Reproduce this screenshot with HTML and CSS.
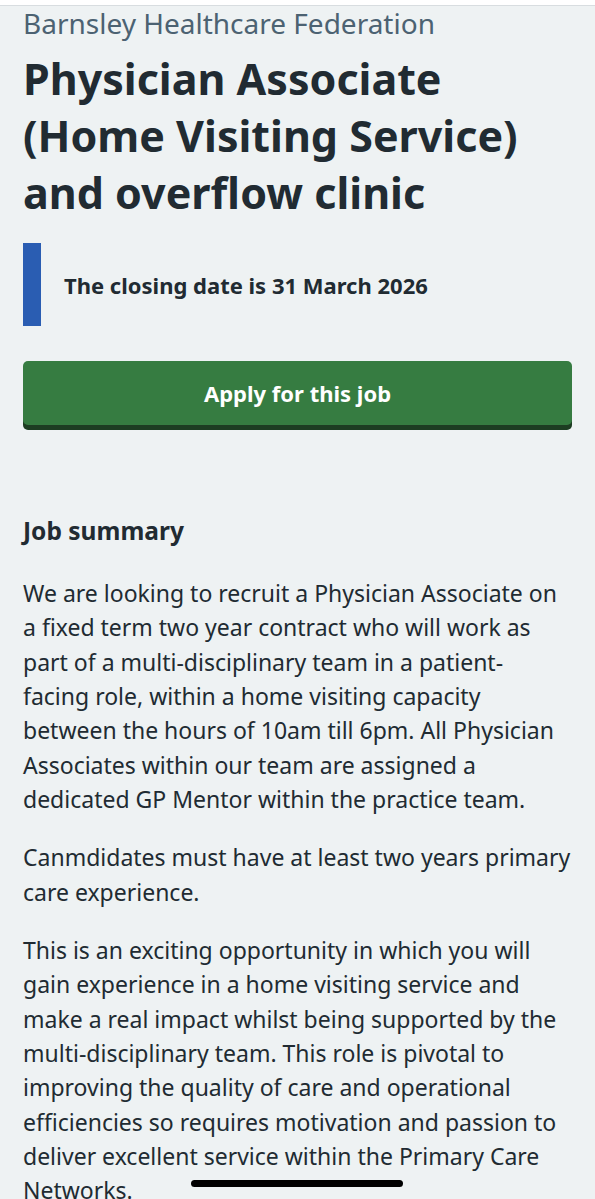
FILE: index.html
```html
<!DOCTYPE html>
<html lang="en">
<head>
<meta charset="utf-8">
<title>Physician Associate (Home Visiting Service) and overflow clinic</title>
<link rel="stylesheet" href="styles.css">
</head>
<body>
<div class="topbar"></div>
<main class="page">
  <p class="org">Barnsley Healthcare Federation</p>
  <h1 class="title">Physician Associate (Home Visiting Service) and overflow clinic</h1>
  <div class="inset">
    <p class="inset-text">The closing date is 31 March 2026</p>
  </div>
  <a class="apply" href="#">Apply for this job</a>
  <section class="summary">
    <h2 class="summary-title">Job summary</h2>
    <p>We are looking to recruit a Physician Associate on a fixed term two year contract who will work as part of a multi-disciplinary team in a patient-<br>facing role, within a home visiting capacity between the hours of 10am till 6pm. All Physician Associates within our team are assigned a dedicated GP Mentor within the practice team.</p>
    <p>Canmdidates must have at least two years primary care experience.</p>
    <p>This is an exciting opportunity in which you will gain experience in a home visiting service and make a real impact whilst being supported by the multi-disciplinary team. This role is pivotal to improving the quality of care and operational efficiencies so requires motivation and passion to deliver excellent service within the Primary Care Networks.</p>
  </section>
</main>
<div class="home-indicator"></div>
</body>
</html>
```

FILE: styles.css
```css
html, body {
  margin: 0;
  padding: 0;
  background: #eef2f3;
  height: 1199px;
  overflow: hidden;
}
body {
  font-family: "Noto Sans", "Open Sans", Arial, sans-serif;
  color: #212b32;
}
.topbar {
  height: 5px;
  background: #ffffff;
  border-bottom: 1px solid #d8dde0;
}
.page {
  padding: 0 23px;
}
.org {
  margin: 0;
  font-size: 28px;
  line-height: 34px;
  color: #4c6272;
}
.title {
  margin: 10px 0 0;
  font-size: 43px;
  line-height: 57px;
  font-weight: 700;
}
.inset {
  margin-top: 22px;
  border-left: 18px solid #2a5db2;
  height: 83px;
  display: flex;
  align-items: center;
  padding-left: 23px;
}
.inset-text {
  margin: 0;
  font-size: 22px;
  font-weight: 700;
}
.apply {
  margin-top: 35px;
  display: flex;
  align-items: center;
  justify-content: center;
  height: 64px;
  background: #367c41;
  color: #ffffff;
  text-decoration: none;
  font-size: 22px;
  font-weight: 700;
  border-radius: 5px;
  box-shadow: 0 5px 0 #1d3d22;
}
.summary {
  margin-top: 90px;
}
.summary-title {
  margin: 0 0 29px;
  font-size: 24.5px;
  line-height: 32px;
  font-weight: 700;
}
.summary p {
  margin: 0 0 24px;
  font-size: 23px;
  line-height: 34.33px;
}
.home-indicator {
  position: fixed;
  left: 191px;
  top: 1180px;
  width: 212px;
  height: 7px;
  border-radius: 4px;
  background: #000000;
}
```
